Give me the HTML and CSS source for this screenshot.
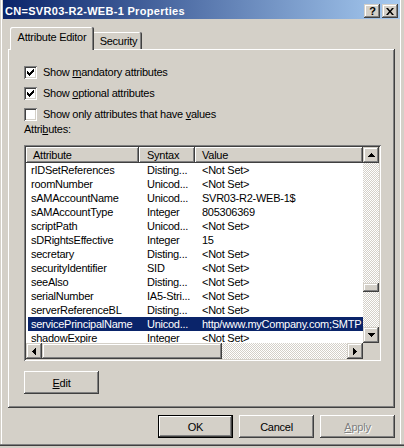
FILE: index.html
```html
<!DOCTYPE html>
<html>
<head>
<meta charset="utf-8">
<link rel="stylesheet" href="styles.css">
</head>
<body>
<div class="window">
  <div class="caption">
    <span class="title">CN=SVR03-R2-WEB-1 Properties</span>
    <div class="capbtns">
      <div class="capbtn help">?</div>
      <div class="capbtn"><svg width="8" height="7" viewBox="0 0 8 7"><path d="M0 0h2l2 2.4 2-2.4h2l-3 3.5 3 3.5h-2l-2-2.4-2 2.4h-2l3-3.5z" fill="#000"/></svg></div>
    </div>
  </div>
  <div class="tabs">
    <div class="tab sel">Attribute Editor</div>
    <div class="tab other">Security</div>
  </div>
  <div class="panel">
    <div class="check"><span class="box"><svg width="7" height="7" viewBox="0 0 7 7"><path d="M0 2h1v1h1v1h1v-1h1v-1h1v-1h1v-1h1v3h-1v1h-1v1h-1v1h-1v1h-1v-1h-1v-1h-1z" fill="#000"/></svg></span><span>Show <u>m</u>andatory attributes</span></div>
    <div class="check"><span class="box"><svg width="7" height="7" viewBox="0 0 7 7"><path d="M0 2h1v1h1v1h1v-1h1v-1h1v-1h1v-1h1v3h-1v1h-1v1h-1v1h-1v1h-1v-1h-1v-1h-1z" fill="#000"/></svg></span><span>Show <u>o</u>ptional attributes</span></div>
    <div class="check last"><span class="box"></span><span>Show only attributes that have <u>v</u>alues</span></div>
    <div class="lbl">Attri<u>b</u>utes:</div>
    <div class="list">
      <div class="view">
        <div class="hdr">
          <div class="hc h1">Attribute</div>
          <div class="hc h2">Syntax</div>
          <div class="hc h3">Value</div>
        </div>
        <div class="row"><span class="c1">rIDSetReferences</span><span class="c2">Disting...</span><span class="c3">&lt;Not Set&gt;</span></div>
        <div class="row"><span class="c1">roomNumber</span><span class="c2">Unicod...</span><span class="c3">&lt;Not Set&gt;</span></div>
        <div class="row"><span class="c1">sAMAccountName</span><span class="c2">Unicod...</span><span class="c3">SVR03-R2-WEB-1$</span></div>
        <div class="row"><span class="c1">sAMAccountType</span><span class="c2">Integer</span><span class="c3">805306369</span></div>
        <div class="row"><span class="c1">scriptPath</span><span class="c2">Unicod...</span><span class="c3">&lt;Not Set&gt;</span></div>
        <div class="row"><span class="c1">sDRightsEffective</span><span class="c2">Integer</span><span class="c3">15</span></div>
        <div class="row"><span class="c1">secretary</span><span class="c2">Disting...</span><span class="c3">&lt;Not Set&gt;</span></div>
        <div class="row"><span class="c1">securityIdentifier</span><span class="c2">SID</span><span class="c3">&lt;Not Set&gt;</span></div>
        <div class="row"><span class="c1">seeAlso</span><span class="c2">Disting...</span><span class="c3">&lt;Not Set&gt;</span></div>
        <div class="row"><span class="c1">serialNumber</span><span class="c2">IA5-Stri...</span><span class="c3">&lt;Not Set&gt;</span></div>
        <div class="row"><span class="c1">serverReferenceBL</span><span class="c2">Disting...</span><span class="c3">&lt;Not Set&gt;</span></div>
        <div class="row selected"><span class="c1">servicePrincipalName</span><span class="c2">Unicod...</span><span class="c3">http/www.myCompany.com;SMTP</span></div>
        <div class="row"><span class="c1">shadowExpire</span><span class="c2">Integer</span><span class="c3">&lt;Not Set&gt;</span></div>
      </div>
      <div class="vs">
        <div class="arrow"><svg width="7" height="4" viewBox="0 0 7 4"><path d="M3 0h1v1h1v1h1v1h1v1h-7v-1h1v-1h1v-1h1z" fill="#000"/></svg></div>
        <div class="vtrack"><div class="vthumb"></div></div>
        <div class="arrow"><svg width="7" height="4" viewBox="0 0 7 4"><path d="M0 0h7v1h-1v1h-1v1h-1v1h-1v-1h-1v-1h-1v-1h-1z" fill="#000"/></svg></div>
      </div>
      <div class="hs">
        <div class="arrow"><svg width="4" height="7" viewBox="0 0 4 7"><path d="M3 0h1v7h-1v-1h-1v-1h-1v-1h-1v-1h1v-1h1v-1h1z" fill="#000"/></svg></div>
        <div class="hthumb"></div>
        <div class="htrack"></div>
        <div class="arrow"><svg width="4" height="7" viewBox="0 0 4 7"><path d="M0 0h1v1h1v1h1v1h1v1h-1v1h-1v1h-1v1h-1z" fill="#000"/></svg></div>
      </div>
      <div class="corner"></div>
    </div>
    <div class="btn edit"><span><u>E</u>dit</span></div>
  </div>
  <div class="footer">
    <div class="btn default">OK</div>
    <div class="btn">Cancel</div>
    <div class="btn disabled"><span><u>A</u>pply</span></div>
  </div>
</div>
</body>
</html>
```

FILE: styles.css
```css
* { box-sizing: border-box; }
body {
  margin: 0;
  background: #d4d0c8;
  font: 11px "Liberation Sans", Arial, sans-serif;
  letter-spacing: -0.25px;
  color: #000;
}
.window {
  width: 404px;
  height: 448px;
  padding: 0 4px 4px 3px;
  background: #d4d0c8;
  display: flex;
  flex-direction: column;
  box-shadow:
    inset 0 -2px #d4d0c8,
    inset 0 -3px #404040,
    inset 0 -4px #808080,
    inset -3px 0 #d4d0c8,
    inset -4px 0 #fff,
    inset 1px 0 #d4d0c8,
    inset 2px 0 #fff;
}
.caption {
  height: 19px;
  flex: none;
  background: linear-gradient(to right, #0a246a, #a6caf0);
  display: flex;
  align-items: flex-start;
  padding: 0 2px 0 2px;
}
.title {
  flex: 1;
  color: #fff;
  font-weight: bold;
  letter-spacing: 0.3px;
  line-height: 13px;
  margin-top: 5px;
  white-space: nowrap;
}
.capbtns {
  display: flex;
  gap: 2px;
  margin-top: 4px;
}
.capbtn {
  width: 16px;
  height: 14px;
  background: #d4d0c8;
  display: flex;
  align-items: center;
  justify-content: center;
  box-shadow: inset -1px -1px #404040, inset 1px 1px #d4d0c8, inset -2px -2px #808080, inset 2px 2px #fff;
}
.capbtn.help {
  font-weight: bold;
  font-size: 11px;
  line-height: 14px;
  padding-left: 1px;
}
.tabs {
  display: flex;
  align-items: flex-end;
  height: 22px;
  flex: none;
  margin: 8px 0 0 7px;
}
.tab {
  height: 17px;
  padding-top: 2px;
  line-height: 14px;
  text-align: center;
  background: #d4d0c8;
  border-radius: 2px 2px 0 0;
  box-shadow: inset -1px 0 #404040, inset 1px 1px #fff, inset -2px 0 #808080;
  white-space: nowrap;
}
.tab.sel {
  width: 84px;
  height: 23px;
  padding-top: 3px;
  margin-bottom: -1px;
  position: relative;
  z-index: 1;
}
.tab.other {
  width: 50px;
  margin-left: -2px;
  padding-left: 3px;
}
.panel {
  flex: none;
  margin-left: 5px;
  width: 387px;
  height: 359px;
  padding: 17px 0 0 16px;
  box-shadow: inset -1px -1px #404040, inset 1px 1px #fff, inset -2px -2px #808080;
}
.check {
  display: flex;
  align-items: center;
  height: 13px;
  line-height: 13px;
  margin-bottom: 8px;
  white-space: nowrap;
}
.check.last { margin-bottom: 2px; }
.box {
  width: 13px;
  height: 13px;
  margin-right: 6px;
  background: #fff;
  display: flex;
  align-items: center;
  justify-content: center;
  box-shadow: inset 1px 1px #808080, inset -1px -1px #fff, inset 2px 2px #404040, inset -2px -2px #d4d0c8;
}
.lbl {
  line-height: 13px;
  height: 13px;
}
.list {
  margin-top: 9px;
  width: 357px;
  height: 216px;
  padding: 2px;
  background: #fff;
  display: grid;
  grid-template-columns: 337px 16px;
  grid-template-rows: 196px 16px;
  box-shadow: inset 1px 1px #808080, inset -1px -1px #fff, inset 2px 2px #404040, inset -2px -2px #d4d0c8;
}
.view {
  overflow: hidden;
  background: #fff;
}
.hdr {
  display: flex;
  height: 16px;
}
.hc {
  height: 16px;
  line-height: 16px;
  padding-left: 7px;
  background: #d4d0c8;
  white-space: nowrap;
  box-shadow: inset -1px -1px #404040, inset 1px 1px #fff, inset -2px -2px #808080;
}
.h1 { width: 113px; }
.h2 { width: 56px; padding-left: 8px; }
.h3 { flex: 1; }
.row {
  display: flex;
  height: 14px;
  line-height: 14px;
  margin-left: 2px;
  white-space: nowrap;
}
.row span { overflow: hidden; }
.c1 { width: 111px; padding-left: 3px; flex: none; }
.c2 { width: 56px; padding-left: 8px; flex: none; }
.c3 { flex: 1; padding-left: 7px; }
.row.selected {
  background: #0a246a;
  color: #fff;
}
.vs {
  display: flex;
  flex-direction: column;
  background: repeating-conic-gradient(#d4d0c8 0 25%, #fff 0 50%) 0 0 / 2px 2px;
}
.hs {
  display: flex;
  background: repeating-conic-gradient(#d4d0c8 0 25%, #fff 0 50%) 0 0 / 2px 2px;
}
.arrow, .vthumb, .hthumb {
  background: #d4d0c8;
  box-shadow: inset -1px -1px #404040, inset 1px 1px #d4d0c8, inset -2px -2px #808080, inset 2px 2px #fff;
}
.arrow {
  width: 16px;
  height: 16px;
  flex: none;
  display: flex;
  align-items: center;
  justify-content: center;
}
.vtrack { flex: 1; }
.vthumb {
  margin-top: 120px;
  height: 9px;
  width: 16px;
}
.hthumb {
  width: 180px;
  height: 16px;
  flex: none;
}
.htrack { flex: 1; }
.corner { background: #d4d0c8; }
.btn {
  width: 75px;
  height: 23px;
  display: flex;
  align-items: center;
  justify-content: center;
  background: #d4d0c8;
  box-shadow: inset -1px -1px #404040, inset 1px 1px #fff, inset -2px -2px #808080;
}
.edit { margin-top: 10px; }
.footer {
  display: flex;
  justify-content: flex-end;
  gap: 6px;
  margin-top: 7px;
  padding-right: 5px;
}
.btn.default {
  border: 1px solid #000;
  box-shadow: inset -1px -1px #404040, inset 1px 1px #fff, inset -2px -2px #808080;
}
.btn.disabled {
  color: #808080;
  text-shadow: 1px 1px #fff;
}
```
